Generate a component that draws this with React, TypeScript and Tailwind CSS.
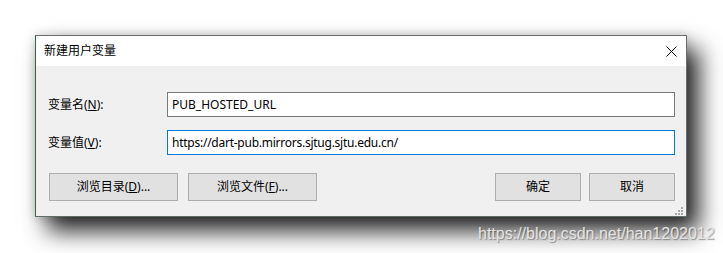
import React from "react";

const font = { fontFamily: '"Noto Sans", "Noto Sans CJK SC", sans-serif' };

function Btn({ w, children }: { w: string; children: React.ReactNode }) {
  return (
    <div
      className={`${w} h-[28px] bg-[#e1e1e1] border border-[#adadad] flex items-center justify-center text-[12px] text-black`}
    >
      {children}
    </div>
  );
}

export default function App() {
  return (
    <div className="relative w-[723px] h-[253px] bg-white overflow-hidden" style={font}>
      <div className="ml-[35px] mt-[35px] w-[652px] h-[182px] relative border border-[#6e6e6e] border-l-[#2d6a40] border-b-[#5e6e62] shadow-[0_0_10px_rgba(0,0,0,0.18),12px_14px_22px_rgba(0,0,0,0.85)] flex flex-col">
        <div className="h-[30px] bg-white flex items-center justify-between pl-[8px] pr-[9px]">
          <span className="text-[12px] text-black leading-none">新建用户变量</span>
          <svg width="11" height="11" viewBox="0 0 11 11">
            <path d="M0.5 0.5 L10.5 10.5 M10.5 0.5 L0.5 10.5" stroke="#000" strokeWidth="1" />
          </svg>
        </div>
        <div className="flex-1 bg-[#f0f0f0] flex flex-col pt-[26px] pl-[12px] pr-[11px]">
          <div className="flex items-center h-[25px]">
            <span className="w-[119px] text-[12px] text-black">
              变量名(<span className="underline">N</span>):
            </span>
            <div className="flex-1 h-[25px] bg-white border border-[#7a7a7a] flex items-center pl-[4px] text-[12px] text-black">
              PUB_HOSTED_URL
            </div>
          </div>
          <div className="flex items-center h-[25px] mt-[13px]">
            <span className="w-[119px] text-[12px] text-black">
              变量值(<span className="underline">V</span>):
            </span>
            <div className="flex-1 h-[25px] bg-white border border-[#0078d7] flex items-center pl-[4px] text-[12px] tracking-[-0.25px] text-black">
              https://dart-pub.mirrors.sjtug.sjtu.edu.cn/
            </div>
          </div>
          <div className="flex items-center mt-[18px] pl-[1px]">
            <Btn w="w-[129px]">
              浏览目录(<span className="underline">D</span>)...
            </Btn>
            <div className="w-[10px]" />
            <Btn w="w-[129px]">
              浏览文件(<span className="underline">F</span>)...
            </Btn>
            <div className="flex-1" />
            <Btn w="w-[86px]">确定</Btn>
            <div className="w-[8px]" />
            <Btn w="w-[86px]">取消</Btn>
          </div>
        </div>
        <svg className="absolute right-[3px] bottom-[1px]" width="8" height="8" viewBox="0 0 8 8">
          <rect x="6" y="0" width="2" height="2" fill="#a8a8a8" />
          <rect x="3" y="3" width="2" height="2" fill="#a8a8a8" />
          <rect x="6" y="3" width="2" height="2" fill="#a8a8a8" />
          <rect x="0" y="6" width="2" height="2" fill="#a8a8a8" />
          <rect x="3" y="6" width="2" height="2" fill="#a8a8a8" />
          <rect x="6" y="6" width="2" height="2" fill="#a8a8a8" />
        </svg>
      </div>
      <div
        className="absolute left-[478px] top-[224px] text-[16px] leading-[20px] text-[#e4e4e4] [text-shadow:1px_1px_1px_rgba(0,0,0,0.35)]"
        style={{ fontFamily: '"Liberation Sans", Arial, sans-serif' }}
      >
        https://blog.csdn.net/han1202012
      </div>
    </div>
  );
}
